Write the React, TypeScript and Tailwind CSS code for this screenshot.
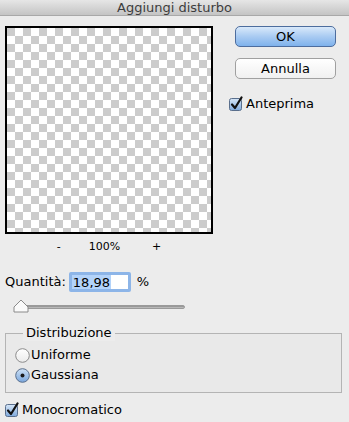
import React from 'react';

const font = { fontFamily: '"DejaVu Sans", "Liberation Sans", sans-serif' };

function CheckBox() {
  return (
    <svg width="15" height="15" viewBox="0 0 15 15" aria-hidden="true">
      <defs>
        <linearGradient id="cbg" x1="0" y1="0" x2="0" y2="1">
          <stop offset="0" stopColor="#d6e6f7" />
          <stop offset="1" stopColor="#7fa9dc" />
        </linearGradient>
      </defs>
      <rect x="0.5" y="2.5" width="12" height="12" rx="2" fill="url(#cbg)" stroke="#5a6f8c" />
      <path d="M3 8.5 L6 12 L12.5 1.5" fill="none" stroke="#111" strokeWidth="2.2" strokeLinecap="round" strokeLinejoin="round" />
    </svg>
  );
}

function Radio({ on }: { on?: boolean }) {
  return (
    <svg width="15" height="15" viewBox="0 0 15 15" aria-hidden="true">
      <defs>
        <linearGradient id="rbOn" x1="0" y1="0" x2="0" y2="1">
          <stop offset="0" stopColor="#cfe2f6" />
          <stop offset="1" stopColor="#79a6dc" />
        </linearGradient>
        <linearGradient id="rbOff" x1="0" y1="0" x2="0" y2="1">
          <stop offset="0" stopColor="#ffffff" />
          <stop offset="1" stopColor="#ebebeb" />
        </linearGradient>
      </defs>
      <circle cx="7.5" cy="7.5" r="6.8" fill={on ? 'url(#rbOn)' : 'url(#rbOff)'} stroke={on ? '#5a6f8c' : '#8c8c8c'} />
      {on && <circle cx="7.5" cy="7.5" r="2" fill="#1a1a1a" />}
    </svg>
  );
}

export default function App() {
  return (
    <div className="w-[349px] h-[422px] bg-[#ececec] text-[13px] text-black overflow-hidden" style={font}>
      {/* title bar */}
      <div className="h-[16px] bg-gradient-to-b from-[#e6e6e6] to-[#c4c4c4] border-b border-[#a8a8a8] flex items-center justify-center text-[13px] leading-none text-[#3d3d3d]">
        Aggiungi disturbo
      </div>

      <div className="flex pt-[10px]">
        {/* preview */}
        <div className="ml-[5px] flex flex-col items-center">
          <div className="w-[208px] h-[208px] border-2 border-black bg-[conic-gradient(#fff_25%,#cccccc_0_50%,#fff_0_75%,#cccccc_0)] bg-[length:16px_16px]" />
          <div className="h-[24px] w-full flex items-center justify-center text-[11px] pt-[2px]">
            <span className="mr-[28px]">-</span>
            <span>100%</span>
            <span className="ml-[32px]">+</span>
          </div>
        </div>

        {/* buttons */}
        <div className="ml-[22px] w-[101px] flex flex-col">
          <button className="h-[21px] rounded-[5px] border border-[#4d6d9e] bg-gradient-to-b from-[#d9e9fa] via-[#a9cbf2] to-[#7fb2ec] text-[13px] leading-none">
            OK
          </button>
          <button className="mt-[11px] h-[21px] rounded-[5px] border border-[#a0a0a0] bg-gradient-to-b from-white to-[#f0f0f0] text-[13px] leading-none">
            Annulla
          </button>
          <label className="mt-[15px] -ml-[6px] flex items-center gap-[2px]">
            <CheckBox />
            <span>Anteprima</span>
          </label>
        </div>
      </div>

      {/* amount */}
      <div className="mt-[13px] ml-[5px] flex items-center h-[22px]">
        <span>Quantità:</span>
        <div className="ml-[3px] w-[62px] h-[20px] border-[3px] border-[#8db5e8] rounded-[2px] bg-white flex items-center">
          <span className="bg-[#b3d3fa] h-full flex items-center px-[1px] leading-none">18,98</span>
        </div>
        <span className="ml-[6px]">%</span>
      </div>

      {/* slider */}
      <div className="relative ml-[15px] mt-[8px] w-[170px] h-[12px]">
        <div className="absolute left-0 right-0 top-[4px] h-[4px] rounded-full bg-gradient-to-b from-[#8a8a8a] to-[#c8c8c8] border border-[#9a9a9a]" />
        <svg className="absolute left-[-2px] top-[-2px]" width="16" height="14" viewBox="0 0 16 14" aria-hidden="true">
          <path d="M1 8 L8 1 L15 8 L15 13 L1 13 Z" fill="#fafafa" stroke="#8a8a8a" />
        </svg>
      </div>

      {/* distribution group */}
      <div className="relative ml-[5px] mt-[20px] w-[337px] h-[60px] border border-[#b4b4b4] bg-[#e9e9e9] pt-[11px] pl-[9px]">
        <span className="absolute -top-[9px] left-[17px] px-[3px] bg-[#ececec] leading-[16px]">Distribuzione</span>
        <label className="flex items-center gap-[1px] h-[20px]">
          <Radio />
          <span>Uniforme</span>
        </label>
        <label className="flex items-center gap-[1px] h-[20px]">
          <Radio on />
          <span>Gaussiana</span>
        </label>
      </div>

      <label className="mt-[7px] ml-[5px] flex items-center gap-[2px]">
        <CheckBox />
        <span>Monocromatico</span>
      </label>
    </div>
  );
}
